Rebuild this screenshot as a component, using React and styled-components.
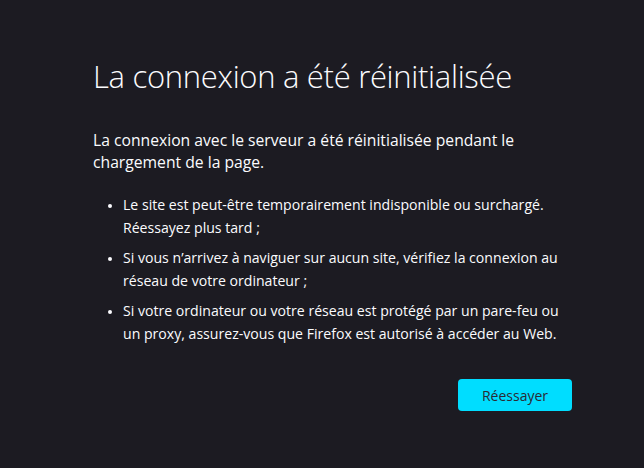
import React from 'react';
import styled, { createGlobalStyle } from 'styled-components';

const GlobalStyle = createGlobalStyle`
  html, body {
    margin: 0;
    padding: 0;
    background: #1c1b22;
    color: #fbfbfe;
    font-family: "Open Sans", "Noto Sans", sans-serif;
  }
`;

const Page = styled.div`
  min-height: 468px;
  box-sizing: border-box;
  padding: 52px 72px 0 93px;
`;

const Container = styled.div`
  width: 479px;
`;

const Title = styled.h1`
  margin: 0;
  font-size: 31px;
  font-weight: 300;
  line-height: 48px;
  letter-spacing: -0.3px;
`;

const Intro = styled.p`
  margin: 29px 0 0;
  font-size: 15.7px;
  line-height: 22px;
`;

const List = styled.ul`
  margin: 20px 0 0;
  padding-left: 30px;
`;

const Item = styled.li`
  font-size: 14.1px;
  line-height: 23px;
  margin-bottom: 7px;
  &::marker {
    font-size: 12px;
  }
`;

const Actions = styled.div`
  display: flex;
  justify-content: flex-end;
  margin-top: 34px;
`;

const RetryButton = styled.button`
  height: 32px;
  width: 114px;
  border: none;
  border-radius: 4px;
  background: #00ddff;
  color: #2b2a33;
  font-family: inherit;
  font-size: 14px;
  cursor: pointer;
`;

export default function App() {
  return (
    <Page>
      <GlobalStyle />
      <Container>
        <Title>La connexion a été réinitialisée</Title>
        <Intro>
          La connexion avec le serveur a été réinitialisée pendant le chargement de la page.
        </Intro>
        <List>
          <Item>Le site est peut-être temporairement indisponible ou surchargé. Réessayez plus tard ;</Item>
          <Item>Si vous n’arrivez à naviguer sur aucun site, vérifiez la connexion au réseau de votre ordinateur ;</Item>
          <Item>Si votre ordinateur ou votre réseau est protégé par un pare-feu ou un proxy, assurez-vous que Firefox est autorisé à accéder au Web.</Item>
        </List>
        <Actions>
          <RetryButton>Réessayer</RetryButton>
        </Actions>
      </Container>
    </Page>
  );
}
